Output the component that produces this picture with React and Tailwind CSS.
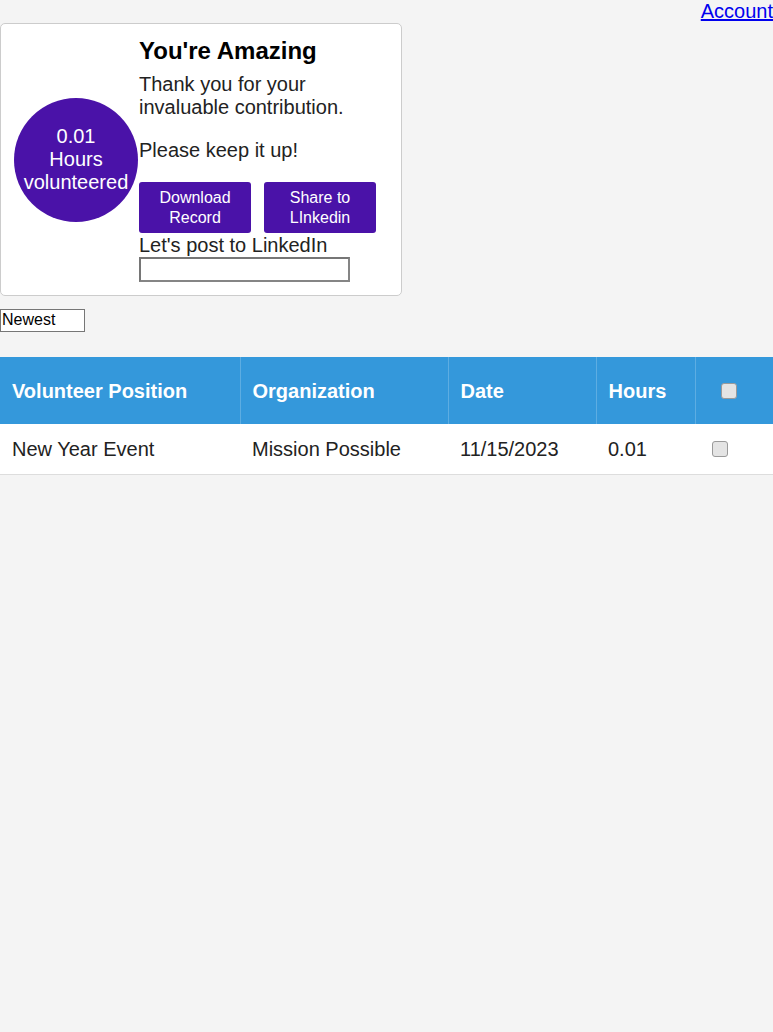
import React from 'react';

const rows = [
  { position: 'New Year Event', org: 'Mission Possible', date: '11/15/2023', hours: '0.01' },
];

const Box = ({ className = '' }) => (
  <span className={`block w-[16px] h-[16px] rounded-[3px] border border-[#9a9a9a] bg-[#e4e4e4] ${className}`}></span>
);

const App = () => {
  return (
    <div className="min-h-screen bg-[#f4f4f4] font-['Liberation_Sans',Arial,sans-serif] text-[#222]">
      {/* Top link */}
      <div className="flex justify-end h-[23px]">
        <a href="#" className="text-[20px] leading-[23px] text-[#0000ee] underline">
          Account
        </a>
      </div>

      {/* Summary card */}
      <div className="w-[402px] flex items-center bg-white border border-[#cccccc] rounded-[5px] p-[13px]">
        <div className="w-[124px] h-[124px] shrink-0 rounded-full bg-[#4a12a8] flex flex-col items-center justify-center text-white text-[20px] leading-[23px] text-center">
          <span>0.01</span>
          <span>Hours</span>
          <span>volunteered</span>
        </div>
        <div className="pl-px">
          <h2 className="text-[24px] leading-[28px] font-bold text-black">You're Amazing</h2>
          <p className="mt-[8px] text-[20px] leading-[23px]">
            Thank you for your
            <br />
            invaluable contribution.
          </p>
          <p className="mt-[20px] text-[20px] leading-[23px]">Please keep it up!</p>
          <div className="mt-[20px] flex gap-[13px]">
            <button className="w-[112px] h-[51px] rounded-[3px] bg-[#4a12a8] text-white text-[16px] leading-[20px]">
              Download
              <br />
              Record
            </button>
            <button className="w-[112px] h-[51px] rounded-[3px] bg-[#4a12a8] text-white text-[16px] leading-[20px]">
              Share to
              <br />
              LInkedin
            </button>
          </div>
          <div className="text-[20px] leading-[23px] mt-px">Let's post to LinkedIn</div>
          <input
            type="text"
            className="block w-[211px] h-[25px] bg-white border-2 border-[#858585] border-t-[#767676] border-l-[#767676]"
          />
        </div>
      </div>

      {/* Sort */}
      <div className="mt-[12px]">
        <select className="appearance-none w-[85px] h-[23px] bg-white border border-[#767676] text-[16px] leading-[20px] pl-[1px] text-black">
          <option>Newest</option>
        </select>
      </div>

      {/* Table */}
      <table className="mt-[25px] w-full border-collapse text-[20px]">
        <thead>
          <tr className="bg-[#3498db] text-white h-[67px]">
            <th className="w-[240px] text-left font-bold pl-[12px] border-r border-[#5dade2]">Volunteer Position</th>
            <th className="w-[208px] text-left font-bold pl-[12px] border-r border-[#5dade2]">Organization</th>
            <th className="w-[148px] text-left font-bold pl-[12px] border-r border-[#5dade2]">Date</th>
            <th className="w-[99px] text-left font-bold pl-[12px] border-r border-[#5dade2]">Hours</th>
            <th className="text-left pl-[25px]">
              <Box />
            </th>
          </tr>
        </thead>
        <tbody>
          {rows.map((r) => (
            <tr key={r.position} className="bg-white h-[50px] border-b border-[#dddddd]">
              <td className="pl-[12px]">{r.position}</td>
              <td className="pl-[12px]">{r.org}</td>
              <td className="pl-[12px]">{r.date}</td>
              <td className="pl-[12px]">{r.hours}</td>
              <td className="pl-[17px]">
                <Box />
              </td>
            </tr>
          ))}
        </tbody>
      </table>
    </div>
  );
};

export default App;
